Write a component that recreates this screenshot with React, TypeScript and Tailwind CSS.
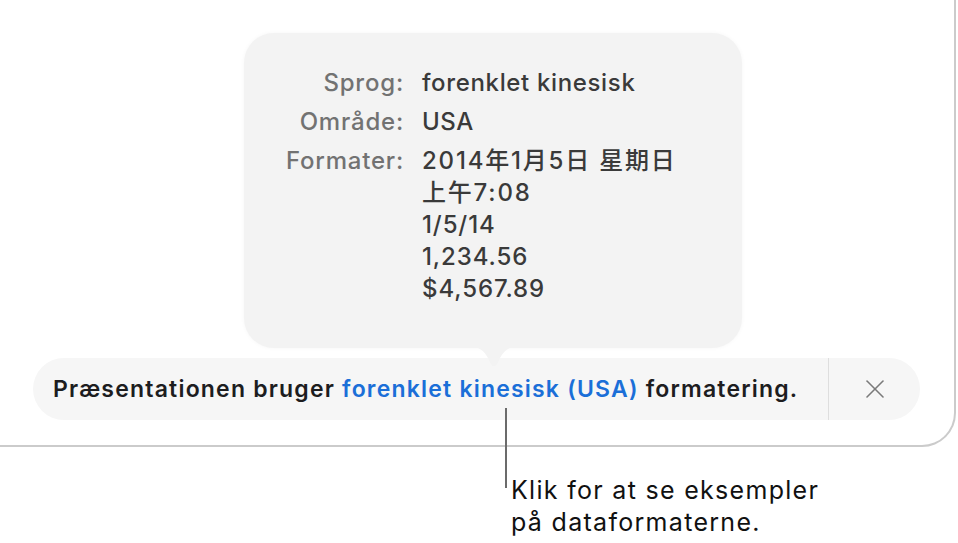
import React from 'react';

const font = { fontFamily: 'Inter, "Noto Sans CJK SC", sans-serif' };

const formats = [
  { text: '2014年1月5日 星期日', cls: 'tracking-[1.8px]' },
  { text: '上午7:08', cls: 'tracking-[1.8px]' },
  { text: '1/5/14', cls: 'tracking-[0.9px]' },
  { text: '1,234.56', cls: 'tracking-[0.9px]' },
  { text: '$4,567.89', cls: 'tracking-[0.9px]' },
];

function FormatPopover() {
  return (
    <div className="relative ml-[244px] w-[498px] h-[315px] rounded-[30px] bg-[#f3f3f3] pt-[34px] shadow-[0_0_4px_rgba(0,0,0,0.04)]">
      <div className="grid grid-cols-[160px_1fr] gap-x-[18px] gap-y-[7px] text-[24px] leading-[32px] font-medium">
        <div className="text-right text-[#727272] tracking-[0.8px]">Sprog:</div>
        <div className="text-[#3a3a3a] tracking-[0.65px]">forenklet kinesisk</div>
        <div className="text-right text-[#727272] tracking-[0.8px]">Område:</div>
        <div className="text-[#3a3a3a] tracking-[0.6px]">USA</div>
        <div className="text-right text-[#727272] tracking-[0.8px]">Formater:</div>
        <div className="text-[#3a3a3a]">
          {formats.map((f) => (
            <div key={f.text} className={f.cls}>
              {f.text}
            </div>
          ))}
        </div>
      </div>
      {/* tail pointing at the link */}
      <svg className="absolute left-[228px] top-[314px]" width="44" height="22" viewBox="0 0 44 22">
        <path d="M0 0 H44 C36 0 32 4 28 11 L25 17 C23.5 20 20.5 20 19 17 L16 11 C12 4 8 0 0 0 Z" fill="#f3f3f3" />
      </svg>
    </div>
  );
}

function InfoBar() {
  return (
    <div className="ml-[33px] mt-[10px] flex h-[62px] w-[887px] items-center rounded-full bg-[#f6f6f6]">
      <p className="flex-1 whitespace-nowrap pl-[20px] text-[23px] font-semibold text-[#1d1d1f] tracking-[1.2px]">
        Præsentationen bruger <span className="text-[#1b6fd8]">forenklet kinesisk (USA)</span> formatering.
      </p>
      <div className="h-full w-px bg-[#dedede]" />
      <button className="flex w-[91px] items-center justify-center">
        <svg width="20" height="20" viewBox="0 0 20 20" stroke="#7a7a7a" strokeWidth="1.6" strokeLinecap="round">
          <line x1="2" y1="2" x2="18" y2="18" />
          <line x1="18" y1="2" x2="2" y2="18" />
        </svg>
      </button>
    </div>
  );
}

export default function App() {
  return (
    <div className="relative h-[543px] w-[958px] overflow-hidden bg-white" style={font}>
      <div className="h-[447px] w-[956px] rounded-br-[34px] border-b-2 border-r-2 border-[#cbcbcb] pt-[33px]">
        <FormatPopover />
        <InfoBar />
      </div>
      {/* callout */}
      <div className="absolute left-[505px] top-[408px] h-[80px] w-[2px] bg-[#6b6b6b]" />
      <div className="ml-[511px] mt-[27px] text-[25px] leading-[32px] tracking-[1.3px] text-[#111]">
        Klik for at se eksempler
        <br />
        på dataformaterne.
      </div>
    </div>
  );
}
